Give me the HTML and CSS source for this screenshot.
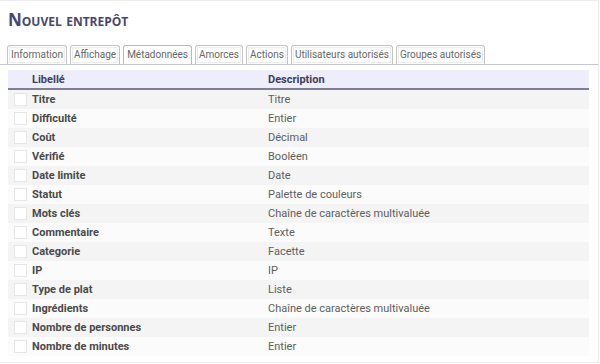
FILE: index.html
```html
<!DOCTYPE html>
<html lang="fr">
<head>
<meta charset="utf-8">
<title>Nouvel entrepôt</title>
<link rel="stylesheet" href="styles.css">
</head>
<body>
<div class="page">
  <h1 class="title">Nouvel entrepôt</h1>
  <ul class="tabs">
    <li class="tab">Information</li>
    <li class="tab">Affichage</li>
    <li class="tab active">Métadonnées</li>
    <li class="tab">Amorces</li>
    <li class="tab">Actions</li>
    <li class="tab">Utilisateurs autorisés</li>
    <li class="tab">Groupes autorisés</li>
  </ul>
  <div class="grid">
    <div class="row head"><span></span><span>Libellé</span><span>Description</span></div>
    <div class="row"><span class="cb"></span><span class="lbl">Titre</span><span class="desc">Titre</span></div>
    <div class="row"><span class="cb"></span><span class="lbl">Difficulté</span><span class="desc">Entier</span></div>
    <div class="row"><span class="cb"></span><span class="lbl">Coût</span><span class="desc">Décimal</span></div>
    <div class="row"><span class="cb"></span><span class="lbl">Vérifié</span><span class="desc">Booléen</span></div>
    <div class="row"><span class="cb"></span><span class="lbl">Date limite</span><span class="desc">Date</span></div>
    <div class="row"><span class="cb"></span><span class="lbl">Statut</span><span class="desc">Palette de couleurs</span></div>
    <div class="row"><span class="cb"></span><span class="lbl">Mots clés</span><span class="desc">Chaîne de caractères multivaluée</span></div>
    <div class="row"><span class="cb"></span><span class="lbl">Commentaire</span><span class="desc">Texte</span></div>
    <div class="row"><span class="cb"></span><span class="lbl">Categorie</span><span class="desc">Facette</span></div>
    <div class="row"><span class="cb"></span><span class="lbl">IP</span><span class="desc">IP</span></div>
    <div class="row"><span class="cb"></span><span class="lbl">Type de plat</span><span class="desc">Liste</span></div>
    <div class="row"><span class="cb"></span><span class="lbl">Ingrédients</span><span class="desc">Chaîne de caractères multivaluée</span></div>
    <div class="row"><span class="cb"></span><span class="lbl">Nombre de personnes</span><span class="desc">Entier</span></div>
    <div class="row"><span class="cb"></span><span class="lbl">Nombre de minutes</span><span class="desc">Entier</span></div>
  </div>
</div>
</body>
</html>
```
FILE: styles.css
```css
html, body {
  margin: 0;
  padding: 0;
  background: #ffffff;
}
body {
  font-family: Roboto, "Liberation Sans", sans-serif;
  font-size: 11px;
  color: #555;
}
.page {
  box-sizing: border-box;
  width: 599px;
  height: 363px;
  border-top: 1px solid #ededed;
  border-right: 1px solid #ededed;
  border-bottom: 1px solid #ededed;
}
.title {
  margin: 0;
  padding: 9px 0 0 8px;
  height: 36px;
  box-sizing: border-box;
  font-family: "Open Sans", Lato, sans-serif;
  font-variant: small-caps;
  font-weight: 700;
  font-size: 17px;
  line-height: 20px;
  color: #48486f;
}
.tabs {
  list-style: none;
  margin: 8px 0 0 0;
  padding: 0 0 0 7px;
  display: flex;
  gap: 3px;
  border-bottom: 1px solid #c6c6d2;
  height: 19px;
}
.tab {
  box-sizing: border-box;
  height: 19px;
  padding: 0 3px;
  font-size: 10px;
  line-height: 18px;
  border: 1px solid #c4c4c4;
  border-bottom: none;
  border-radius: 3px 3px 0 0;
  box-shadow: inset 0 0 0 1px #fff, inset 0 0 0 2px #ededed;
  color: #666;
  background: #fff;
}
.tab.active {
  box-shadow: inset 0 0 0 1px #fff;
  border-color: #b8b8c4;
}
.grid {
  margin: 5px 0 0 8px;
  width: 581px;
}
.row {
  display: grid;
  grid-template-columns: 24px 236px 1fr;
  align-items: center;
  height: 19px;
}
.row:nth-child(even) {
  background: #f4f4f4;
}
.row:nth-child(odd) {
  background: #fbfbfb;
}
.row.head {
  height: 18px;
  background: #ededfc;
  border-bottom: 2px solid #7e7e98;
  font-weight: 700;
  color: #40405e;
}
.cb {
  box-sizing: border-box;
  width: 13px;
  height: 13px;
  margin-left: 6px;
  background: #fff;
  border: 1px solid #e6e6e6;
}
.lbl {
  font-weight: 700;
  color: #4a4a4a;
}
.desc {
  color: #5e5e5e;
}
```
